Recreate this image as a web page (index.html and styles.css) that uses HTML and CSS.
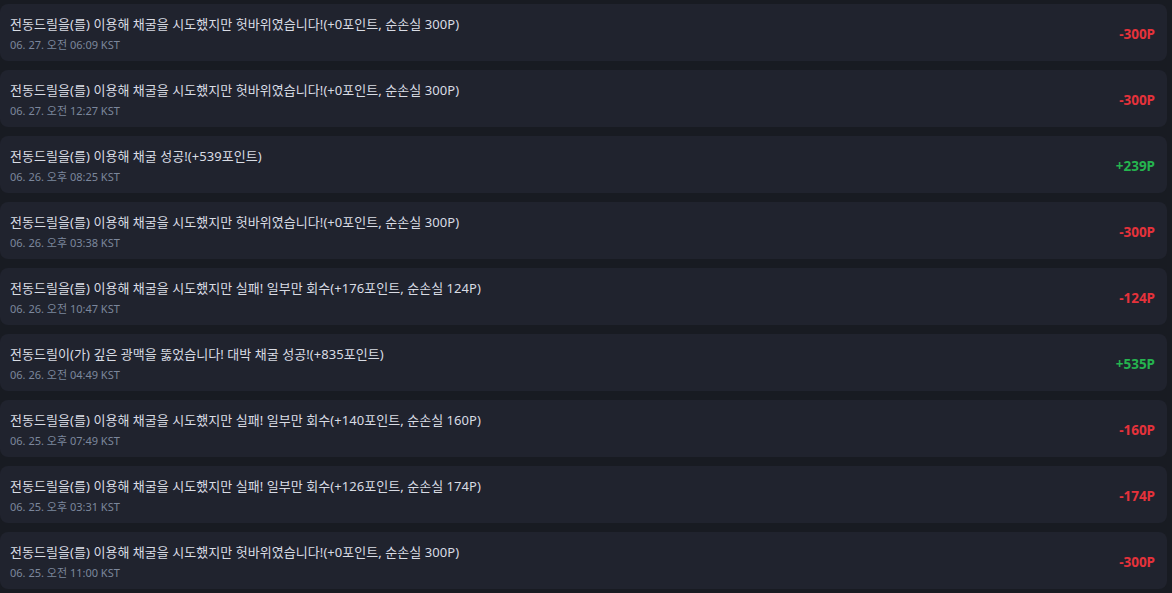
FILE: index.html
```html
<!DOCTYPE html>
<html lang="ko">
<head>
    <meta charset="UTF-8">
    <title>채굴 기록</title>
    <link rel="stylesheet" href="styles.css">
</head>
<body>
<div class="log-list">
    <div class="log-item">
        <div class="log-info">
            <div class="log-title">전동드릴을(를) 이용해 채굴을 시도했지만 헛바위였습니다!(+0포인트, 순손실 300P)</div>
            <div class="log-date">06. 27. 오전 06:09 KST</div>
        </div>
        <div class="log-amount minus">-300P</div>
    </div>
    <div class="log-item">
        <div class="log-info">
            <div class="log-title">전동드릴을(를) 이용해 채굴을 시도했지만 헛바위였습니다!(+0포인트, 순손실 300P)</div>
            <div class="log-date">06. 27. 오전 12:27 KST</div>
        </div>
        <div class="log-amount minus">-300P</div>
    </div>
    <div class="log-item">
        <div class="log-info">
            <div class="log-title">전동드릴을(를) 이용해 채굴 성공!(+539포인트)</div>
            <div class="log-date">06. 26. 오후 08:25 KST</div>
        </div>
        <div class="log-amount plus">+239P</div>
    </div>
    <div class="log-item">
        <div class="log-info">
            <div class="log-title">전동드릴을(를) 이용해 채굴을 시도했지만 헛바위였습니다!(+0포인트, 순손실 300P)</div>
            <div class="log-date">06. 26. 오후 03:38 KST</div>
        </div>
        <div class="log-amount minus">-300P</div>
    </div>
    <div class="log-item">
        <div class="log-info">
            <div class="log-title">전동드릴을(를) 이용해 채굴을 시도했지만 실패! 일부만 회수(+176포인트, 순손실 124P)</div>
            <div class="log-date">06. 26. 오전 10:47 KST</div>
        </div>
        <div class="log-amount minus">-124P</div>
    </div>
    <div class="log-item">
        <div class="log-info">
            <div class="log-title">전동드릴이(가) 깊은 광맥을 뚫었습니다! 대박 채굴 성공!(+835포인트)</div>
            <div class="log-date">06. 26. 오전 04:49 KST</div>
        </div>
        <div class="log-amount plus">+535P</div>
    </div>
    <div class="log-item">
        <div class="log-info">
            <div class="log-title">전동드릴을(를) 이용해 채굴을 시도했지만 실패! 일부만 회수(+140포인트, 순손실 160P)</div>
            <div class="log-date">06. 25. 오후 07:49 KST</div>
        </div>
        <div class="log-amount minus">-160P</div>
    </div>
    <div class="log-item">
        <div class="log-info">
            <div class="log-title">전동드릴을(를) 이용해 채굴을 시도했지만 실패! 일부만 회수(+126포인트, 순손실 174P)</div>
            <div class="log-date">06. 25. 오후 03:31 KST</div>
        </div>
        <div class="log-amount minus">-174P</div>
    </div>
    <div class="log-item">
        <div class="log-info">
            <div class="log-title">전동드릴을(를) 이용해 채굴을 시도했지만 헛바위였습니다!(+0포인트, 순손실 300P)</div>
            <div class="log-date">06. 25. 오전 11:00 KST</div>
        </div>
        <div class="log-amount minus">-300P</div>
    </div>
</div>
</body>
</html>
```

FILE: styles.css
```css
body {
    margin: 0;
    background: #181b22;
    font-family: "Noto Sans", "Noto Sans CJK KR", sans-serif;
}

.log-list {
    display: flex;
    flex-direction: column;
    gap: 9px;
    padding-top: 4px;
    width: 1167px;
}

.log-item {
    display: flex;
    align-items: center;
    justify-content: space-between;
    background: #20232e;
    border-radius: 8px;
    padding: 10px 12px 8px 10px;
    height: 57px;
    box-sizing: border-box;
}

.log-title {
    color: #d9dce4;
    font-size: 13px;
    line-height: 20px;
    letter-spacing: 0.05px;
}

.log-date {
    color: #7c879c;
    font-size: 11px;
    line-height: 16px;
    margin-top: 3px;
}

.log-amount {
    font-size: 13.5px;
    font-weight: bold;
    margin-top: 1px;
}

.minus {
    color: #e5323b;
}

.plus {
    color: #25b44f;
}
```
